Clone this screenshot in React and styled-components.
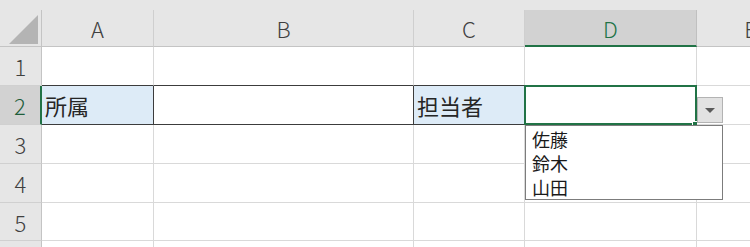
import React from "react";
import styled, { createGlobalStyle } from "styled-components";

const Global = createGlobalStyle`
  html, body { margin: 0; padding: 0; background: #ffffff; }
  body { width: 750px; height: 247px; overflow: hidden; }
`;

const GREEN = "#217346";
const GRID = "#d9d9d9";
const DARK = "#3c3c3c";

const Sheet = styled.div`
  display: grid;
  grid-template-columns: 42px 112px 260px 111px 172px 108px;
  grid-template-rows: 10px 37px 39px 39px 39px 39px 38px 39px;
  width: 750px;
  height: 247px;
  overflow: hidden;
  background: #ffffff;
  font-family: "Noto Sans CJK JP", "Noto Sans", sans-serif;
`;

const TopBand = styled.div`
  grid-column: 1 / -1;
  background: #e6e6e6;
`;

const Corner = styled.div`
  background: #e6e6e6;
  border-right: 1px solid #c4c4c4;
  border-bottom: 1px solid #c4c4c4;
  display: flex;
  align-items: flex-end;
  justify-content: flex-end;
  padding: 0 3px 2px 0;
`;

const Triangle = styled.div`
  width: 0;
  height: 0;
  border-left: 29px solid transparent;
  border-bottom: 29px solid #b4b4b4;
`;

const ColHead = styled.div`
  background: ${(p) => (p.$active ? "#d2d2d2" : "#e6e6e6")};
  border-right: 1px solid ${(p) => (p.$active ? "#c0c0c0" : "#cfcfcf")};
  border-bottom: ${(p) => (p.$active ? `2px solid ${GREEN}` : "1px solid #c4c4c4")};
  color: ${(p) => (p.$active ? GREEN : "#404040")};
  font-size: 22px;
  font-weight: 300;
  display: flex;
  align-items: center;
  justify-content: center;
  padding-bottom: ${(p) => (p.$active ? "0" : "1px")};
  box-sizing: border-box;
`;

const RowHead = styled.div`
  background: ${(p) => (p.$active ? "#d2d2d2" : "#e6e6e6")};
  border-right: ${(p) => (p.$active ? `2px solid ${GREEN}` : "1px solid #c4c4c4")};
  border-bottom: 1px solid #d0d0d0;
  color: ${(p) => (p.$active ? "#1e5e3a" : "#404040")};
  font-size: 22px;
  font-weight: 300;
  display: flex;
  align-items: center;
  justify-content: center;
  box-sizing: border-box;
`;

const Cell = styled.div`
  position: relative;
  background: ${(p) => p.$bg || "#ffffff"};
  border-right: 1px solid ${(p) => p.$rb || GRID};
  border-bottom: 1px solid ${(p) => p.$bb || GRID};
  font-size: 22px;
  color: #262626;
  display: flex;
  align-items: center;
  padding-left: 3px;
  box-sizing: border-box;
  white-space: nowrap;
`;

const ActiveFrame = styled.div`
  position: absolute;
  left: -1px;
  top: -1px;
  width: 173px;
  height: 40px;
  border: 2px solid ${GREEN};
  box-sizing: border-box;
  pointer-events: none;
`;

const FillHandle = styled.div`
  position: absolute;
  left: 167px;
  top: 35px;
  width: 6px;
  height: 5px;
  background: ${GREEN};
  border-top: 1px solid #ffffff;
  border-left: 1px solid #ffffff;
`;

const DropButton = styled.div`
  position: absolute;
  left: 172px;
  top: 11px;
  width: 26px;
  height: 26px;
  background: #e2e2e2;
  border: 1px solid #b3b3b3;
  box-sizing: border-box;
  display: flex;
  align-items: center;
  justify-content: center;
  z-index: 2;
`;

const Arrow = styled.div`
  width: 0;
  height: 0;
  border-left: 5px solid transparent;
  border-right: 5px solid transparent;
  border-top: 5px solid #5a5a5a;
`;

const ListBox = styled.div`
  position: absolute;
  left: 0;
  top: 39px;
  width: 198px;
  height: 75px;
  background: #ffffff;
  border: 1px solid #7c7c7c;
  box-sizing: border-box;
  padding: 1px 0 0 6px;
  display: flex;
  flex-direction: column;
  z-index: 3;
`;

const ListItem = styled.div`
  font-size: 18px;
  line-height: 24px;
  color: #1a1a1a;
`;

const cols = ["A", "B", "C", "D", "E"];

export default function App() {
  return (
    <>
      <Global />
      <Sheet>
        <TopBand />
        <Corner>
          <Triangle />
        </Corner>
        {cols.map((c) => (
          <ColHead key={c} $active={c === "D"}>
            {c}
          </ColHead>
        ))}

        <RowHead>1</RowHead>
        <Cell $bb={DARK} />
        <Cell $bb={DARK} />
        <Cell $bb={DARK} />
        <Cell />
        <Cell />

        <RowHead $active>2</RowHead>
        <Cell $bg="#ddebf7" $rb={DARK} $bb={DARK}>所属</Cell>
        <Cell $rb={DARK} $bb={DARK} />
        <Cell $bg="#ddebf7" $rb={DARK} $bb={DARK}>担当者</Cell>
        <Cell>
          <ActiveFrame />
          <FillHandle />
          <DropButton>
            <Arrow />
          </DropButton>
          <ListBox>
            <ListItem>佐藤</ListItem>
            <ListItem>鈴木</ListItem>
            <ListItem>山田</ListItem>
          </ListBox>
        </Cell>
        <Cell />

        {[3, 4, 5, 6].map((r) => (
          <React.Fragment key={r}>
            <RowHead>{r}</RowHead>
            <Cell />
            <Cell />
            <Cell />
            <Cell />
            <Cell />
          </React.Fragment>
        ))}
      </Sheet>
    </>
  );
}
